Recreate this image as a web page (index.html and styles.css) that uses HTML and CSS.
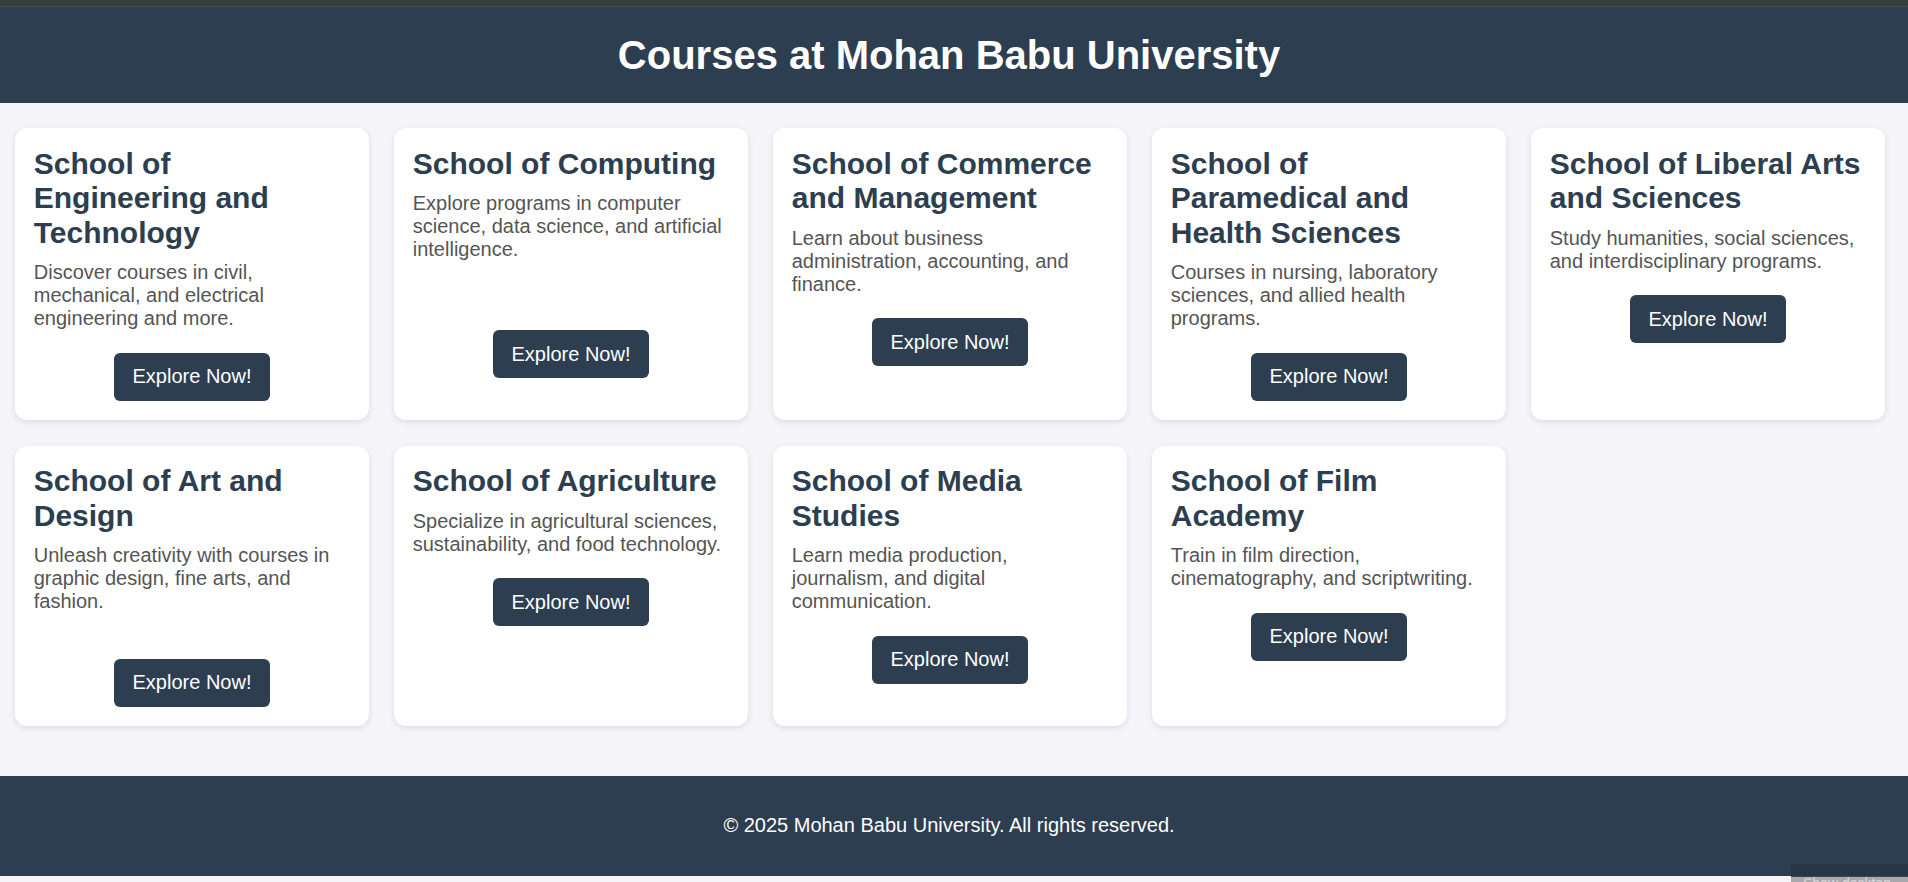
FILE: index.html
```html
<!DOCTYPE html>
<html lang="en">
<head>
<meta charset="utf-8">
<title>Courses at Mohan Babu University</title>
<link rel="stylesheet" href="styles.css">
</head>
<body>
<div class="topbar"></div>
<header class="site-header">
  <h1 class="site-title">Courses at Mohan Babu University</h1>
</header>
<main class="courses">
  <article class="card">
    <h2 class="card-title">School of Engineering and Technology</h2>
    <p class="card-text">Discover courses in civil, mechanical, and electrical engineering and more.</p>
    <button class="btn">Explore Now!</button>
  </article>
  <article class="card">
    <h2 class="card-title">School of Computing</h2>
    <p class="card-text card-text--extra2">Explore programs in computer science, data science, and artificial intelligence.</p>
    <button class="btn">Explore Now!</button>
  </article>
  <article class="card">
    <h2 class="card-title">School of Commerce and Management</h2>
    <p class="card-text">Learn about business administration, accounting, and finance.</p>
    <button class="btn">Explore Now!</button>
  </article>
  <article class="card">
    <h2 class="card-title">School of Paramedical and Health Sciences</h2>
    <p class="card-text">Courses in nursing, laboratory sciences, and allied health programs.</p>
    <button class="btn">Explore Now!</button>
  </article>
  <article class="card">
    <h2 class="card-title">School of Liberal Arts and Sciences</h2>
    <p class="card-text">Study humanities, social sciences, and interdisciplinary programs.</p>
    <button class="btn">Explore Now!</button>
  </article>
  <article class="card">
    <h2 class="card-title">School of Art and Design</h2>
    <p class="card-text card-text--extra1">Unleash creativity with courses in graphic design, fine arts, and fashion.</p>
    <button class="btn">Explore Now!</button>
  </article>
  <article class="card">
    <h2 class="card-title">School of Agriculture</h2>
    <p class="card-text">Specialize in agricultural sciences, sustainability, and food technology.</p>
    <button class="btn">Explore Now!</button>
  </article>
  <article class="card">
    <h2 class="card-title">School of Media Studies</h2>
    <p class="card-text">Learn media production, journalism, and digital communication.</p>
    <button class="btn">Explore Now!</button>
  </article>
  <article class="card">
    <h2 class="card-title">School of Film Academy</h2>
    <p class="card-text">Train in film direction, cinematography, and scriptwriting.</p>
    <button class="btn">Explore Now!</button>
  </article>
</main>
<footer class="site-footer">
  <p class="footer-text">© 2025 Mohan Babu University. All rights reserved.</p>
</footer>
<div class="tooltip"><span class="tooltip-label">Show desktop</span></div>
</body>
</html>
```
FILE: styles.css
```css
html {
  background: #f4f4f9;
}
body {
  margin: 0;
  background: #f4f4f9;
  font-family: "Liberation Sans", Arial, sans-serif;
  color: #333;
}
.topbar {
  height: 6px;
  background: #373e3e;
  border-bottom: 1px solid #4b5051;
}
.site-header {
  background: #2c3e50;
  padding: 25px 10px 25px 0;
  text-align: center;
}
.site-title {
  margin: 0;
  color: #ffffff;
  font-size: 40px;
  line-height: 46px;
  font-weight: bold;
}
.courses {
  display: grid;
  grid-template-columns: repeat(5, 354px);
  column-gap: 25px;
  row-gap: 26px;
  padding: 25px 0 50px 15px;
  align-items: stretch;
}
.card {
  background: #ffffff;
  border-radius: 12px;
  box-shadow: 0 2px 6px rgba(0, 0, 0, 0.1);
  padding: 18.75px;
}
.card-title {
  margin: 0 0 11px;
  color: #2c3e50;
  font-size: 30px;
  line-height: 34.5px;
  font-weight: bold;
}
.card-text {
  margin: 0 0 22.5px;
  color: #555555;
  font-size: 20px;
  line-height: 23px;
}
.card-text--extra1 {
  margin-bottom: 45.5px;
}
.card-text--extra2 {
  margin-bottom: 69px;
}
.btn {
  display: block;
  margin: 0 auto;
  background: #2c3e50;
  color: #ffffff;
  border: none;
  border-radius: 6px;
  padding: 12.5px 18.75px;
  font-family: "Liberation Sans", Arial, sans-serif;
  font-size: 20px;
  line-height: 23px;
  cursor: pointer;
}
.site-footer {
  background: #2c3e50;
  color: #ffffff;
  text-align: center;
  padding: 18.75px 10px 18.75px 0;
}
.footer-text {
  margin: 20px 0;
  font-size: 20px;
  line-height: 23px;
}
.tooltip {
  position: absolute;
  left: 1791px;
  top: 864px;
  width: 117px;
  height: 18px;
  background: rgba(40, 52, 66, 0.9);
  overflow: hidden;
}
.tooltip-label {
  display: block;
  margin-top: 13px;
  height: 5px;
  background: #a8a8ac;
  color: #d8d8da;
  font-size: 14px;
  line-height: 12px;
  padding-left: 12px;
  overflow: hidden;
}
```
